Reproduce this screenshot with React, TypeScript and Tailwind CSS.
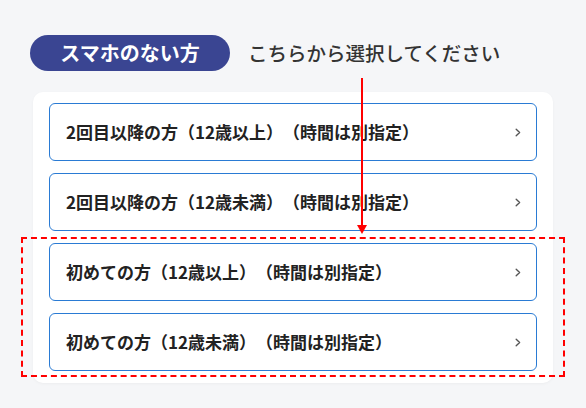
import React from 'react';

const options = [
  '2回目以降の方（12歳以上）（時間は別指定）',
  '2回目以降の方（12歳未満）（時間は別指定）',
  '初めての方（12歳以上）（時間は別指定）',
  '初めての方（12歳未満）（時間は別指定）',
];

const Chevron = () => (
  <svg width="6" height="9" viewBox="0 0 6 9" fill="none" stroke="#555" strokeWidth={1.4} strokeLinecap="round" strokeLinejoin="round">
    <path d="M1.2 1.2L4.6 4.5L1.2 7.8" />
  </svg>
);

const App: React.FC = () => {
  return (
    <div
      className="relative w-[586px] h-[408px] bg-[#f5f6f8] pt-[35px] overflow-hidden [text-spacing-trim:space-all]"
      style={{ fontFamily: '"Noto Sans CJK JP", "Noto Sans", sans-serif' }}
    >
      {/* Header */}
      <div className="flex items-center ml-[30px] gap-[18px]">
        <div className="flex h-[36px] w-[200px] items-center justify-center rounded-full bg-[#3a4592] text-[20px] font-bold text-white">
          スマホのない方
        </div>
        <span className="text-[19.5px] font-medium text-[#333]">こちらから選択してください</span>
      </div>

      {/* Options card */}
      <div className="mt-[21px] ml-[33px] w-[520px] rounded-[10px] bg-white px-4 pt-[11px] pb-3 flex flex-col gap-3 shadow-[0_1px_3px_rgba(0,0,0,0.04)]">
        {options.map((label) => (
          <div
            key={label}
            className="flex h-[58px] items-center justify-between rounded-[6px] border border-[#2a7bd4] pl-[16px] pr-[15px]"
          >
            <span className="text-[17px] font-semibold text-[#222]">{label}</span>
            <Chevron />
          </div>
        ))}
      </div>

      {/* Annotation: arrow */}
      <div className="absolute left-[361px] top-[78px] h-[148px] w-[2px] bg-[#ff0000]" />
      <svg className="absolute left-[357px] top-[225px]" width="10" height="9" viewBox="0 0 10 9">
        <path d="M0 0H10L5 9Z" fill="#ff0000" />
      </svg>

      {/* Annotation: dashed box */}
      <div className="absolute left-[21px] top-[237px] h-[140px] w-[544px] border-2 border-dashed border-[#ff0000]" />
    </div>
  );
};

export default App;
